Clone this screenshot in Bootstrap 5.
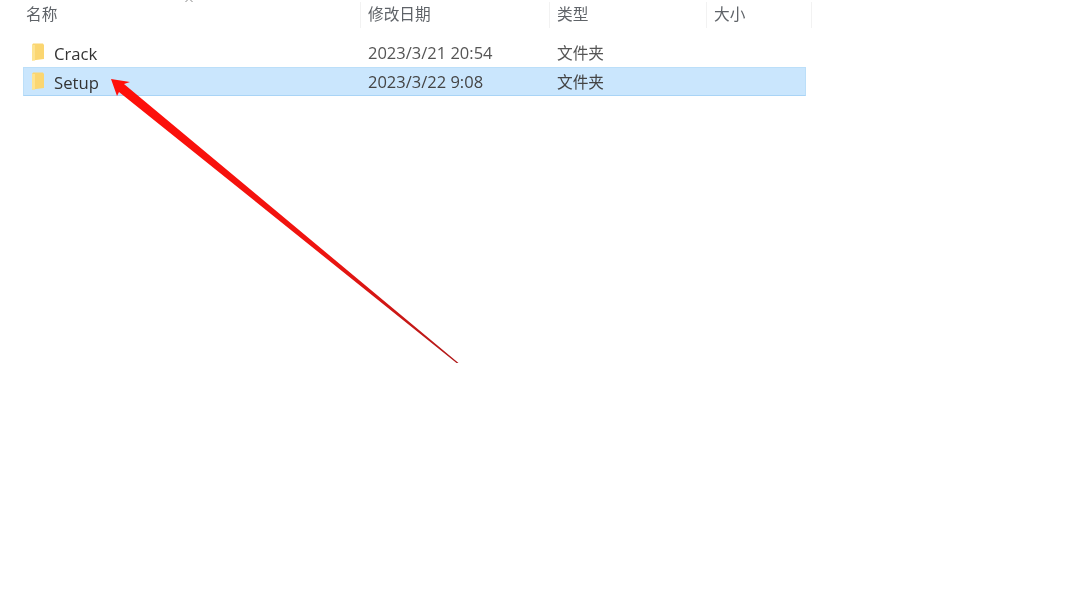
<!DOCTYPE html>
<html lang="zh">
<head>
<meta charset="utf-8">
<title>Setup</title>
<link href="https://cdn.jsdelivr.net/npm/bootstrap@5.3.0/dist/css/bootstrap.min.css" rel="stylesheet">
<style>
html,body{height:100%;margin:0;background:#fff;overflow:hidden}
.shot{position:relative;width:1080px;height:605px;font-family:"Open Sans","Noto Sans CJK SC",sans-serif;color:#3b3b3b;font-size:15.7px;filter:blur(.4px)}
.caret-top{height:2px;padding-left:184px;overflow:hidden}
.caret-top svg{display:block;margin-top:-2px}
.head-row{height:26px;padding-left:26px;color:#5f6368}
.hc{height:26px;display:flex;align-items:center;padding-left:7px;border-right:1px solid #f2f2f2}
.c-name{width:335px;padding-left:0;flex:none}
.c-date{width:189px;flex:none}
.c-type{width:157px;flex:none}
.c-size{width:105px;flex:none}
.file-list{margin:12px 0 0 23px;width:783px}
.file-row{height:27px;border:1px solid transparent}
.file-row.sel{height:29px;padding-top:2px;background:#cae6fd;border-color:#bcdff9;border-bottom-color:#a9d4f6}
.f-name{width:344px;flex:none;display:flex;align-items:center;gap:9px;padding-left:7px;color:#333;font-size:16.7px}
.f-date{width:189px;flex:none;color:#555;font-size:16.5px}
.f-type{flex:none;color:#555}
.sel .f-date,.sel .f-type{color:#444}
.fld{display:block;flex:none;margin-top:-3px}
.arrow-lay{position:absolute;left:0;top:0}
</style>
</head>
<body>
<div class="shot">
  <div class="caret-top"><svg width="10" height="4" viewBox="0 0 10 4"><path d="M1.5 4 5 .5 8.500 4" fill="none" stroke="#888" stroke-width="1"/></svg></div>
  <div class="head-row d-flex">
    <div class="hc c-name">名称</div>
    <div class="hc c-date">修改日期</div>
    <div class="hc c-type">类型</div>
    <div class="hc c-size">大小</div>
  </div>
  <div class="file-list">
    <div class="file-row d-flex align-items-center">
      <div class="f-name">
        <svg class="fld" width="14" height="18" viewBox="0 0 14 18"><path d="M1 17.500V2L2 .5H12L13 2V16Z" fill="#fbd671"/><path d="M1 2H4V17.500H1Z" fill="#fde391"/></svg>
        <span>Crack</span>
      </div>
      <div class="f-date">2023/3/21 20:54</div>
      <div class="f-type">文件夹</div>
    </div>
    <div class="file-row sel d-flex align-items-center">
      <div class="f-name">
        <svg class="fld" width="14" height="18" viewBox="0 0 14 18"><path d="M1 17.500V2L2 .5H12L13 2V16Z" fill="#fbd671"/><path d="M1 2H4V17.500H1Z" fill="#fde391"/></svg>
        <span>Setup</span>
      </div>
      <div class="f-date">2023/3/22 9:08</div>
      <div class="f-type">文件夹</div>
    </div>
  </div>
  <svg class="arrow-lay" width="1080" height="605" viewBox="0 0 1080 605">
    <defs><linearGradient id="ag" gradientUnits="userSpaceOnUse" x1="120" y1="88" x2="458" y2="363"><stop offset="0" stop-color="#ff0f0a"/><stop offset=".6" stop-color="#ee1410"/><stop offset="1" stop-color="#b01a1a"/></linearGradient></defs>
    <polygon points="111,79 130,82 124,84 458.500,363 456.500,363 119,92 117,96" fill="url(#ag)"/>
  </svg>
</div>
<script src="https://cdn.jsdelivr.net/npm/bootstrap@5.3.0/dist/js/bootstrap.bundle.min.js"></script>
</body>
</html>
